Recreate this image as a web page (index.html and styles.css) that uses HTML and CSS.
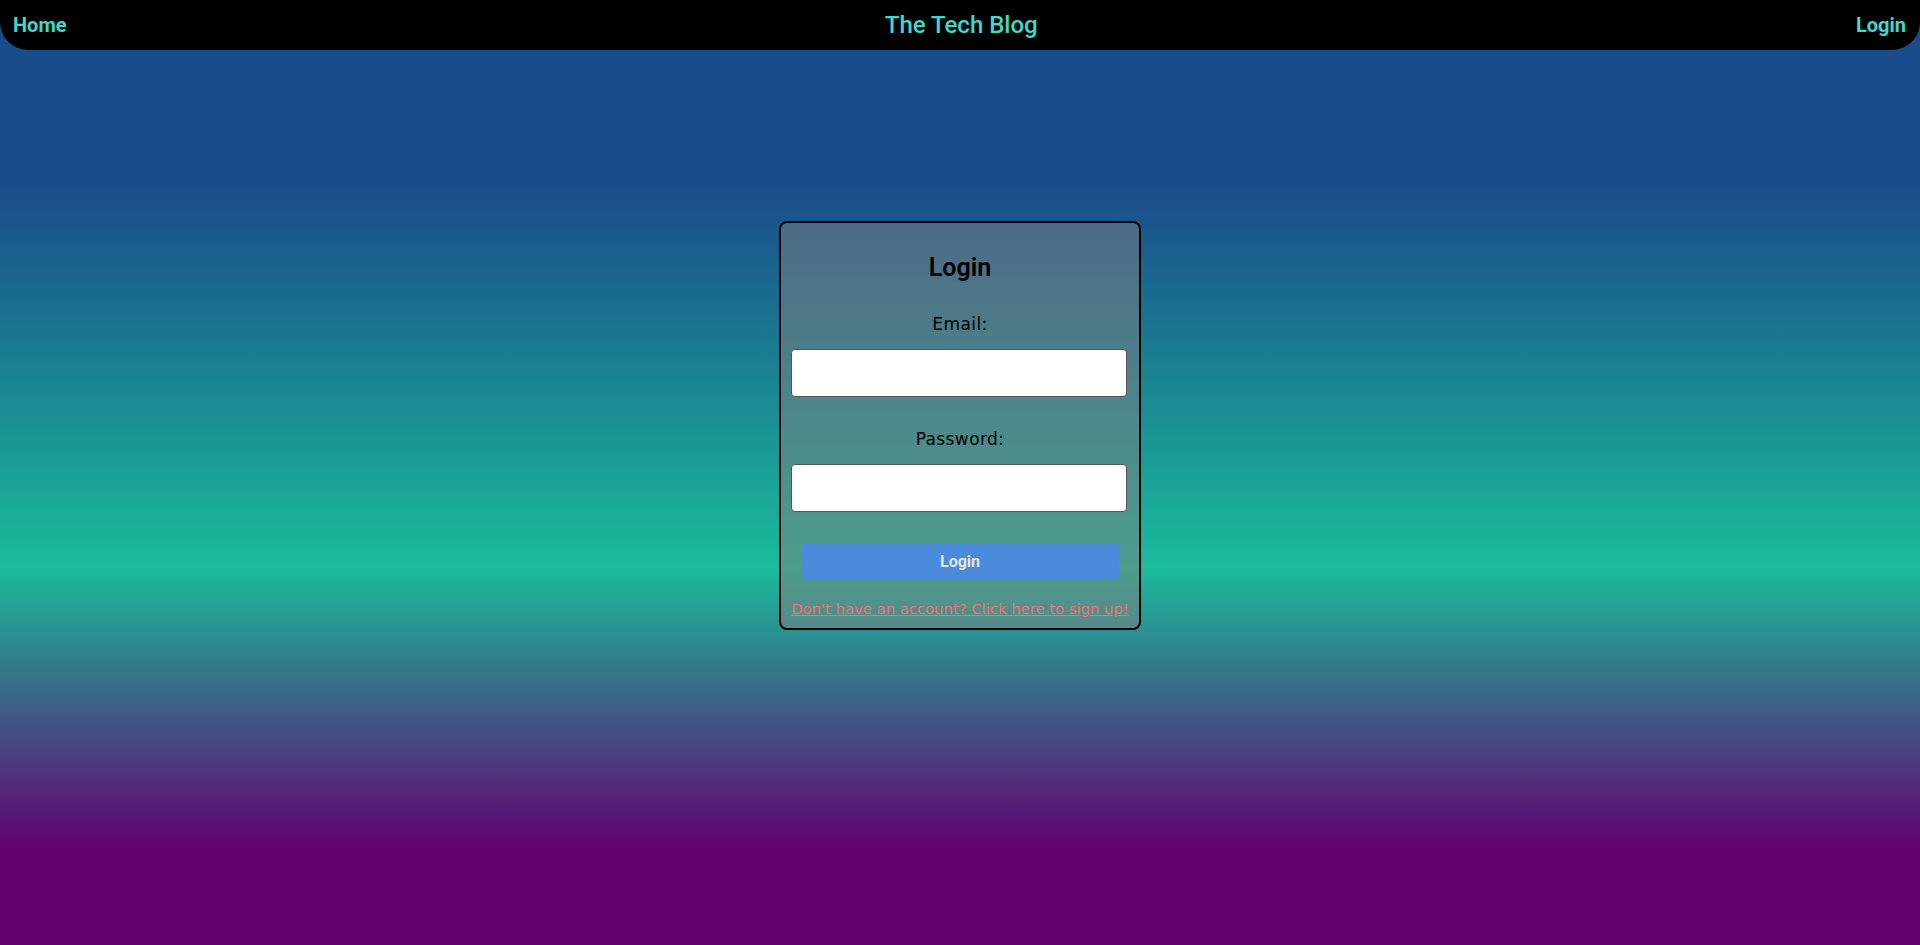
FILE: index.html
```html
<!DOCTYPE html>
<html lang="en">
<head>
<meta charset="utf-8">
<title>The Tech Blog</title>
<link rel="stylesheet" href="styles.css">
</head>
<body>
  <header class="topbar">
    <a class="nav-link" href="#">Home</a>
    <h1 class="brand">The Tech Blog</h1>
    <a class="nav-link" href="#">Login</a>
  </header>
  <main class="main">
    <form class="card">
      <h2 class="card-title">Login</h2>
      <label class="field-label" for="email">Email:</label>
      <input class="field-input" id="email" type="email">
      <label class="field-label field-label--second" for="password">Password:</label>
      <input class="field-input" id="password" type="password">
      <button class="submit-btn" type="button">Login</button>
      <a class="signup-link" href="#">Don't have an account? Click here to sign up!</a>
    </form>
  </main>
</body>
</html>
```

FILE: styles.css
```css
html, body {
  margin: 0;
  padding: 0;
}

body {
  min-height: 945px;
  font-family: "DejaVu Sans", sans-serif;
  background: linear-gradient(180deg, #1a4c8b 0%, #1a4c8b 20%, #1abc9a 60%, #620070 90%, #620070 100%);
}

.topbar {
  height: 50px;
  background: #000;
  border-radius: 0 0 28px 28px;
  display: flex;
  align-items: center;
  justify-content: space-between;
  padding: 0 14px 0 13px;
  box-sizing: border-box;
}

.nav-link {
  font-family: Roboto, sans-serif;
  font-weight: 700;
  font-size: 20px;
  color: #40d8cc;
  text-decoration: none;
}

.brand {
  margin: 0;
  font-family: Roboto, sans-serif;
  font-weight: 500;
  font-size: 24px;
  color: #40d8cc;
}

.main {
  display: flex;
  justify-content: center;
  padding-top: 171px;
}

.card {
  width: 362px;
  box-sizing: border-box;
  border: 2px solid #000;
  border-radius: 8px;
  background: rgba(128, 128, 128, 0.5);
  padding: 0 10px 9px;
  display: flex;
  flex-direction: column;
  align-items: stretch;
}

.card-title {
  margin: 30px 0 0;
  font-family: Roboto, sans-serif;
  font-weight: 600;
  font-size: 25px;
  line-height: 30px;
  text-align: center;
  color: #000;
}

.field-label {
  margin-top: 30px;
  font-size: 17px;
  line-height: 22px;
  text-align: center;
  color: #000;
  letter-spacing: 0.4px;
}

.field-label--second {
  margin-top: 31px;
}

.field-input {
  margin-top: 14px;
  width: 336px;
  height: 48px;
  box-sizing: border-box;
  border: 1px solid #555;
  border-radius: 4px;
  background: #fff;
}

.submit-btn {
  margin: 31px 10px 0;
  height: 37px;
  border: none;
  border-radius: 5px;
  background: #4a8cdb;
  color: #e4e4e4;
  font-family: Roboto, sans-serif;
  font-weight: 700;
  font-size: 16px;
}

.signup-link {
  margin-top: 19px;
  font-size: 14.8px;
  line-height: 20px;
  text-align: center;
  white-space: nowrap;
  color: #f07272;
}
```
